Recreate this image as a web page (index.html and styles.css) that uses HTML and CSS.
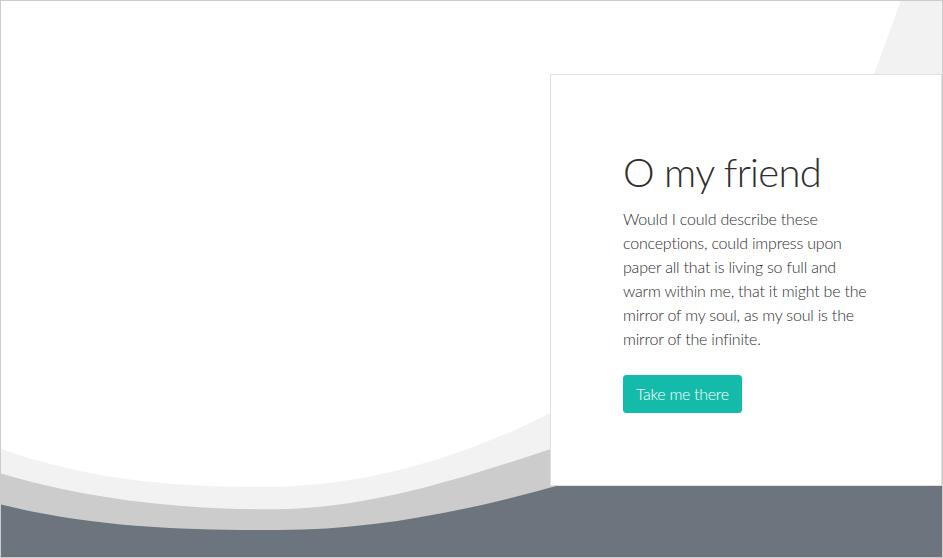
FILE: index.html
```html
<!DOCTYPE html>
<html lang="en">
<head>
<meta charset="utf-8">
<title>O my friend</title>
<link rel="stylesheet" href="styles.css">
</head>
<body>
<div class="page">
  <svg class="backdrop" viewBox="0 0 943 558" width="943" height="558" aria-hidden="true">
    <path class="layer-light" d="M901 0 Q888 36 872 80 L860 140 L943 140 L943 0 Z"/>
    <path class="layer-light" d="M0 448.3 C93 482 187 488 280 486.7 C370 484 460 458.3 550 413.3 L600 380 L943 380 L943 558 L0 558 Z"/>
    <path class="layer-mid" d="M0 473.3 C93 501 187 510 280 509.3 C370 508 460 479 550 449.3 L600 430 L943 430 L943 558 L0 558 Z"/>
    <path class="layer-dark" d="M0 504.3 C93 527.5 187 530.5 280 530 C373 530 467 511 560 485 L943 485 L943 558 L0 558 Z"/>
  </svg>
  <section class="card">
    <h1 class="card-title">O my friend</h1>
    <p class="card-text">Would I could describe these conceptions, could impress upon paper all that is living so full and warm within me, that it might be the mirror of my soul, as my soul is the mirror of the infinite.</p>
    <a class="btn" href="#">Take me there</a>
  </section>
</div>
</body>
</html>
```

FILE: styles.css
```css
html, body {
  margin: 0;
  padding: 0;
  background: #fff;
}

.page {
  position: relative;
  box-sizing: border-box;
  width: 943px;
  height: 558px;
  border: 1px solid #cccccc;
  overflow: hidden;
  display: flex;
  justify-content: flex-end;
  align-items: flex-start;
  padding-top: 73px;
  font-family: Lato, "Open Sans", sans-serif;
  color: #2e2e2e;
}

.backdrop {
  position: absolute;
  left: -1px;
  top: -1px;
}

.layer-light { fill: #f2f2f2; }
.layer-mid { fill: #cccccc; }
.layer-dark { fill: #6c757d; }

.card {
  position: relative;
  box-sizing: border-box;
  width: 392px;
  background: #fff;
  border: 1px solid #dfdfe4;
  padding: 73px 72px 72px 72px;
}

.card-title {
  margin: 0 0 11px 0;
  font-size: 40px;
  line-height: 48px;
  font-weight: 300;
  letter-spacing: -0.7px;
}

.card-text {
  margin: 0 0 24px 0;
  font-size: 16px;
  line-height: 24px;
  font-weight: 300;
  letter-spacing: -0.2px;
}

.btn {
  display: inline-block;
  box-sizing: border-box;
  height: 38px;
  padding: 6px 12px;
  border: 1px solid #15b9a8;
  border-radius: 3px;
  background: #15bbaa;
  color: #fff;
  font-size: 16px;
  line-height: 24px;
  font-weight: 300;
  letter-spacing: -0.3px;
  text-decoration: none;
}
```
